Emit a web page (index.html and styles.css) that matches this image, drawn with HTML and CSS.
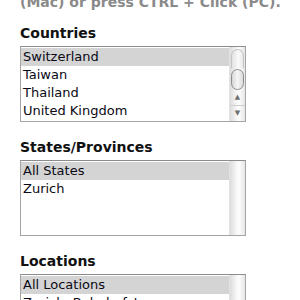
FILE: index.html
```html
<!DOCTYPE html>
<html lang="en">
<head>
<meta charset="UTF-8">
<meta name="viewport" content="width=device-width, initial-scale=1.0">
<link rel="stylesheet" href="styles.css">
</head>
<body>

<p class="hint">(Mac) or press CTRL + Click (PC).</p>

<div class="field">
    <h2>Countries</h2>
    <div class="listbox">
        <ul class="options">
            <li class="selected">Switzerland</li>
            <li>Taiwan</li>
            <li>Thailand</li>
            <li>United Kingdom</li>
        </ul>
        <div class="scrollbar">
            <div class="track-cap"></div>
            <div class="thumb"></div>
            <div class="track-rest"></div>
            <div class="arrow up">&#9650;</div>
            <div class="arrow down">&#9660;</div>
        </div>
    </div>
</div>

<div class="field">
    <h2>States/Provinces</h2>
    <div class="listbox">
        <ul class="options">
            <li class="selected">All States</li>
            <li>Zurich</li>
        </ul>
        <div class="scrollbar empty"></div>
    </div>
</div>

<div class="field">
    <h2>Locations</h2>
    <div class="listbox">
        <ul class="options">
            <li class="selected">All Locations</li>
            <li>Zurich, Bahnhofstrasse</li>
        </ul>
        <div class="scrollbar empty"></div>
    </div>
</div>

</body>
</html>
```

FILE: styles.css
```css
body {
    margin: 0;
    padding: 0 20px;
    font-family: "DejaVu Sans", Verdana, sans-serif;
    color: #000;
    background: #fff;
    overflow: hidden;
}

.hint {
    margin: -6px 0 0;
    font-size: 14px;
    line-height: 16px;
    font-weight: bold;
    color: #8a8a8a;
    white-space: nowrap;
}

.field {
    margin-top: 17px;
}

.hint + .field {
    margin-top: 15px;
}

.field h2 {
    margin: 0 0 5px;
    font-size: 14px;
    line-height: 16px;
    font-weight: bold;
    color: #111;
}

.listbox {
    display: flex;
    width: 224px;
    height: 74px;
    border: 1px solid #a5a5a5;
    border-top-color: #8c8c8c;
    overflow: hidden;
}

.options {
    flex: 1;
    list-style: none;
    margin: 0;
    padding: 1px 0 0;
    overflow: hidden;
}

.options li {
    font-size: 13px;
    line-height: 18px;
    padding-left: 2px;
    white-space: nowrap;
    overflow: hidden;
    color: #0a0a14;
}

.options li.selected {
    background: #d4d4d4;
}

.scrollbar {
    width: 15px;
    display: flex;
    flex-direction: column;
    background: linear-gradient(to right, #dcdcdc, #f4f4f4 40%, #fdfdfd 60%, #e6e6e6);
    border-left: 1px solid #e2e2e2;
}

.track-cap {
    height: 18px;
    margin: 2px 1px 0;
    border: 1px solid #c4c4c4;
    border-bottom: none;
    border-radius: 7px 7px 0 0;
    background: linear-gradient(to right, #e2e2e2, #fafafa 60%, #e8e8e8);
}

.thumb {
    height: 20px;
    margin: 1px 1px 0;
    border: 1px solid #8e8e8e;
    border-radius: 7px;
    background: linear-gradient(to right, #d6d6d6, #f6f6f6 50%, #dadada);
}

.track-rest {
    flex: 1;
}

.arrow {
    height: 15px;
    font-size: 7px;
    line-height: 15px;
    text-align: center;
    color: #6e6e6e;
    border-top: 1px solid #cfcfcf;
}

.arrow.up {
    border-top: none;
}
```
